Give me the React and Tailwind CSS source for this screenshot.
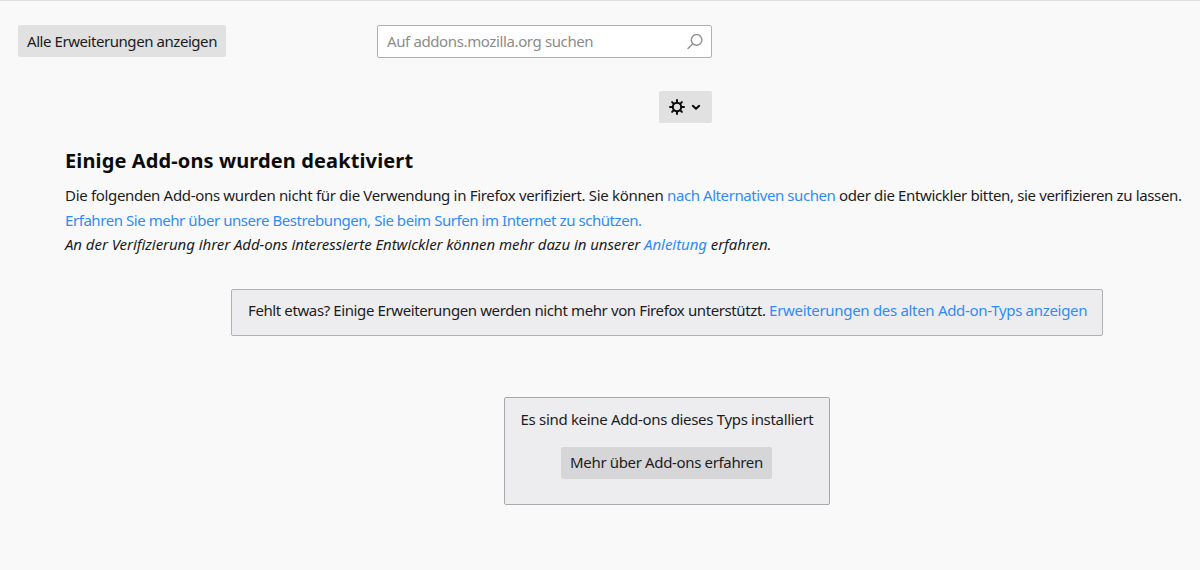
import { clsx } from "clsx";

const SearchIcon = () => (
  <svg
    className="h-4 w-4 shrink-0"
    viewBox="0 0 16 16"
    fill="none"
    stroke="#8f8f8f"
    strokeWidth="1.4"
    strokeLinecap="round"
    aria-hidden="true"
  >
    <circle cx="9.6" cy="5.9" r="5.3" />
    <path d="M5.6 9.9 1 14.4" />
  </svg>
);

const GearIcon = () => (
  <svg
    className="h-4 w-4"
    viewBox="0 0 16 16"
    fill="none"
    stroke="#0c0c0d"
    strokeWidth="2"
    strokeLinecap="round"
    aria-hidden="true"
  >
    <circle cx="8" cy="8" r="4.2" />
    <path d="M8 1v2.5M8 12.5V15M1 8h2.5M12.5 8H15M3.1 3.1l1.7 1.7M11.2 11.2l1.7 1.7M3.1 12.9l1.7-1.7M11.2 4.8l1.7-1.7" />
  </svg>
);

const ArrowIcon = () => (
  <svg
    className="h-2 w-2.5"
    viewBox="0 0 10 8"
    fill="none"
    stroke="#0c0c0d"
    strokeWidth="2"
    strokeLinecap="round"
    strokeLinejoin="round"
    aria-hidden="true"
  >
    <path d="M1.8 2.8 5 5.7l3.2-2.9" />
  </svg>
);

const Button = ({ className, children, ...props }) => (
  <button
    type="button"
    className={clsx(
      "flex h-8 items-center justify-center rounded-xs whitespace-nowrap",
      className
    )}
    {...props}
  >
    {children}
  </button>
);

const TextLink = ({ className, children }) => (
  <a href="#" className={clsx("text-[#2f8cf5]", className)}>
    {children}
  </a>
);

export default function App() {
  return (
    <div className="h-[570px] w-[1200px] overflow-hidden border-t border-[#e0e0e1] bg-[#f9f9fa] font-['Noto_Sans',sans-serif] text-[15px] text-[#1c1c1e]">
      {/* Toolbar */}
      <header className="flex w-[712px] items-start justify-between pt-6 pl-[18px]">
        <Button className="w-[208px] bg-[#e1e1e2] tracking-[-0.44px]">
          Alle Erweiterungen anzeigen
        </Button>
        <label className="flex h-[33px] w-[335px] items-center rounded-xs border border-[#b1b1b1] bg-white pr-2 pl-[9px]">
          <input
            type="text"
            placeholder="Auf addons.mozilla.org suchen"
            className="min-w-0 flex-1 tracking-[-0.38px] outline-none placeholder:text-[#8c8c8c]"
          />
          <SearchIcon />
        </label>
      </header>

      <div className="flex w-[712px] justify-end pt-[33px]">
        <Button
          className="w-[53px] gap-1.5 bg-[#e1e1e2] pr-0.5"
          aria-label="Werkzeuge"
        >
          <GearIcon />
          <ArrowIcon />
        </Button>
      </div>

      {/* Disabled add-ons */}
      <section className="pt-[23px] pl-[65px] whitespace-nowrap">
        <h1 className="text-[20px] leading-[30px] font-bold tracking-[0.12px] text-[#0c0c0d]">
          Einige Add-ons wurden deaktiviert
        </h1>
        <p className="pt-[7px] leading-[25px] tracking-[-0.32px]">
          Die folgenden Add-ons wurden nicht für die Verwendung in Firefox
          verifiziert. Sie können{" "}
          <TextLink className="tracking-[-0.42px]">
            nach Alternativen suchen
          </TextLink>{" "}
          <span className="tracking-[-0.36px]">
            oder die Entwickler bitten, sie verifizieren zu lassen.
          </span>
        </p>
        <p className="leading-[25px] tracking-[-0.44px]">
          <TextLink>
            Erfahren Sie mehr über unsere Bestrebungen, Sie beim Surfen im
            Internet zu schützen.
          </TextLink>
        </p>
        <p className="leading-[23px] tracking-[-0.06px] italic">
          An der Verifizierung ihrer Add-ons interessierte Entwickler können
          mehr dazu in unserer <TextLink>Anleitung</TextLink> erfahren.
        </p>
      </section>

      {/* Legacy notice */}
      <div className="mt-[33px] ml-[231px] flex h-[47px] w-[872px] items-center rounded-xs border border-[#b1b1b3] bg-[#ededef] px-4 pb-1 whitespace-nowrap">
        <p className="tracking-[-0.39px]">
          Fehlt etwas? Einige Erweiterungen werden nicht mehr von Firefox
          unterstützt.{" "}
          <TextLink className="tracking-[-0.31px]">
            Erweiterungen des alten Add-on-Typs anzeigen
          </TextLink>
        </p>
      </div>

      {/* Empty list */}
      <div className="mt-[61px] ml-[504px] flex h-[108px] w-[326px] flex-col items-center rounded-xs border border-[#a9a9ab] bg-[#ededef] pt-[9px] whitespace-nowrap">
        <p className="leading-6 tracking-[-0.32px]">
          Es sind keine Add-ons dieses Typs installiert
        </p>
        <Button className="mt-4 mr-px w-[211px] bg-[#d6d6d8] pb-0.5 tracking-[-0.35px]">
          Mehr über Add-ons erfahren
        </Button>
      </div>
    </div>
  );
}
